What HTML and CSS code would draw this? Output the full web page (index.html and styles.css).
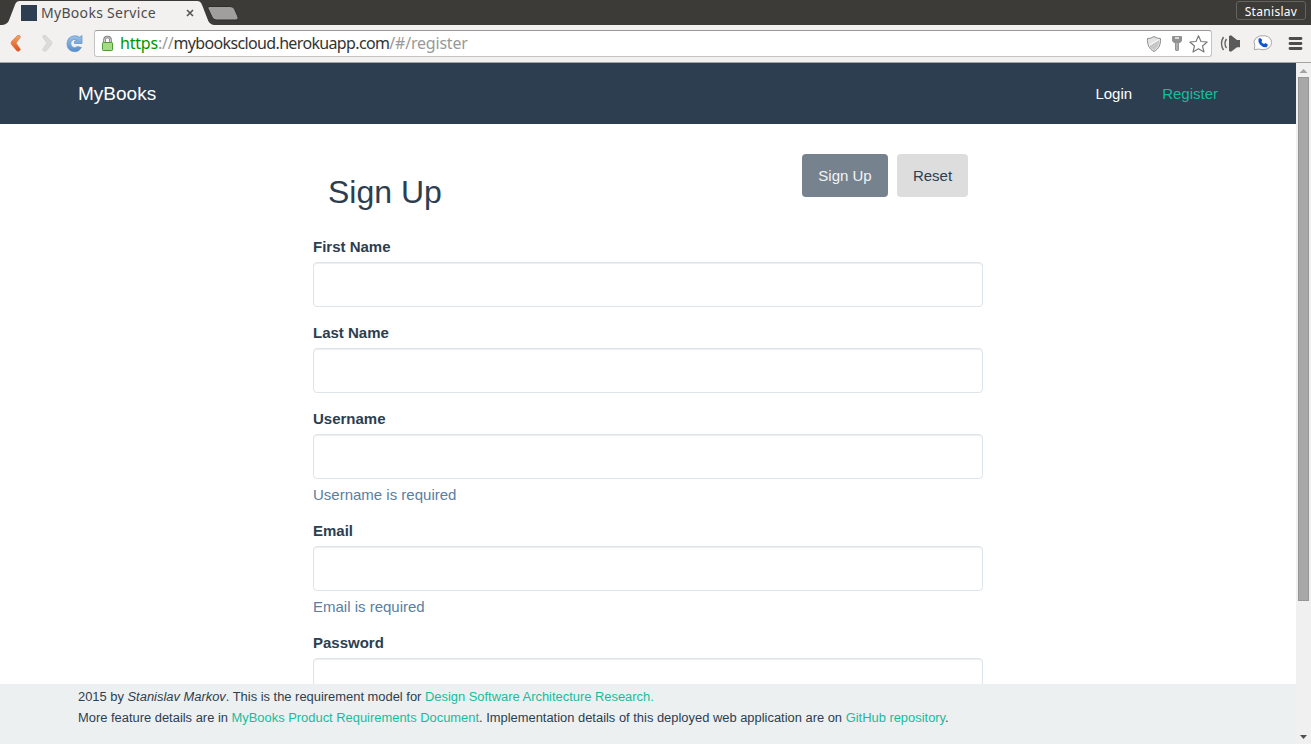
FILE: index.html
```html
<!DOCTYPE html>
<html lang="en">
<head>
<meta charset="utf-8">
<title>MyBooks Service</title>
<link rel="stylesheet" href="styles.css">
</head>
<body>
<div class="window">
  <div class="tabstrip">
    <svg class="tab-shape" width="245" height="25" viewBox="0 0 245 25">
      <path d="M0 25C6 25 8 23 9.500 19L14.500 6C16 2 17 1 21 1H196C200 1 201 2 202.500 6L207.500 19C209 23 211 25 216 25Z" fill="#f2f1f0"/>
      <path d="M209 6.500H230Q233.500 6.500 234.500 9L238 17Q239 20 236 20H216Q213.500 20 212 17L208 8.500Q207.500 6.500 209 6.500Z" fill="#a09f9d" stroke="#302f2b"/>
    </svg>
    <div class="tab">
      <span class="favicon"></span>
      <span class="tab-title">MyBooks Service</span>
      <svg class="tab-close" width="8" height="8" viewBox="0 0 8 8"><path d="M1 1L7 7M7 1L1 7" stroke="#555" stroke-width="1.600"/></svg>
    </div>
    <span class="profile">Stanislav</span>
  </div>
  <div class="toolbar">
    <svg class="nav-icons" width="94" height="36" viewBox="0 26 94 36">
      <defs>
        <linearGradient id="orange" x2="0" y2="1"><stop stop-color="#f3a765"/><stop offset="1" stop-color="#df4c1b"/></linearGradient>
        <linearGradient id="blue" x2="0" y2="1"><stop stop-color="#9cc1e8"/><stop offset="1" stop-color="#548dcc"/></linearGradient>
      </defs>
      <path d="M17.500 35.500Q20 34.500 20.500 37L16 43L20.500 49.500Q19.500 52 17 51L11.500 44.500Q10.500 43 11.500 41.500Z" fill="url(#orange)" stroke="#d96a32" stroke-width=".6"/>
      <path d="M45.500 35.500Q43 34.500 42.500 37L47 43L42.500 49.500Q43.500 52 46 51L51.500 44.500Q52.500 43 51.500 41.500Z" fill="#dcdbda" stroke="#cbcac9" stroke-width=".6"/>
      <path d="M82 35.500V43.500H74.500V41.500L77 40.200Q73.500 38.300 71.300 41Q69.800 44 71.800 46.500Q74.500 49 77.500 46.500L81.500 47.500Q79 52 74.500 51.700Q67 51 67 43.500Q67.500 36.500 74.500 35.800Q77.500 35.700 79.500 37.200Z" fill="url(#blue)" stroke="#5c91c8" stroke-width=".7"/>
    </svg>
    <div class="omnibox">
      <svg class="lock" width="13" height="17" viewBox="0 0 13 17">
        <path d="M3.500 8V5Q3.500 2 6.500 2T9.500 5V8" fill="none" stroke="#777" stroke-width="2.600"/>
        <path d="M3.500 8V5Q3.500 2 6.500 2T9.500 5V8" fill="none" stroke="#ddd" stroke-width=".9"/>
        <rect x="1.500" y="7.500" width="10" height="8" rx=".8" fill="#a3dc82" stroke="#4b9b32"/>
      </svg>
      <span class="url"><span class="scheme">https</span><span class="dim">://</span><span class="host">mybookscloud.herokuapp.com</span><span class="dim">/#/register</span></span>
      <svg class="box-icons" width="64" height="20" viewBox="1145 34 64 20">
        <path d="M1154 36.500Q1157 38.700 1160.500 38.500C1161 44 1159 49 1154 51.500C1149 49 1147 44 1147.500 38.500Q1151 38.700 1154 36.500Z" fill="#e3e3e3" stroke="#8c8c8c"/>
        <path d="M1149 46L1159.300 39.700Q1159.500 46.500 1154 50Q1151 48.500 1149 46Z" fill="#c7c7c7"/>
        <path d="M1149 45.500L1159 39.500" stroke="#fff"/>
        <path d="M1173 36H1181Q1182 36 1182 37V41L1180 43H1179V50L1178 51H1176L1175 50V43H1174L1172 41V37Q1172 36 1173 36Z" fill="#929292"/>
        <path d="M1175 38H1179" stroke="#fff" stroke-width="1.300"/><path d="M1177 43V50" stroke="#ccc"/>
        <path d="M1198.500 35.700L1201 41.500L1207.200 42L1202.500 46L1204 52L1198.500 48.800L1193 52L1194.500 46L1189.800 42L1196 41.500Z" fill="#fff" stroke="#777" stroke-width="1.100" stroke-linejoin="round"/>
      </svg>
    </div>
    <svg class="ext-icons" width="90" height="24" viewBox="1217 32 90 24">
      <path d="M1229 36L1231 35.300L1237 40H1240V47.300H1237L1231 51.700L1229 51Z" fill="#5a5a5a"/>
      <path d="M1226.500 39Q1223.500 43.500 1226.500 48M1223.500 37Q1219.500 43.500 1223.500 50" fill="none" stroke="#666" stroke-width="1.500"/>
      <path d="M1254.300 49.700L1254.800 45.500Q1252.500 41 1256 38Q1259.500 34.800 1265 35.800Q1271.500 37.200 1271.500 42.500Q1271 49.300 1263 49.700Q1260 49.500 1258.500 49Z" fill="#fff" stroke="#a6a6a6"/>
      <path d="M1260 38L1262.200 39.700L1261.500 42Q1262.500 43.500 1264 44L1265.800 43L1268 45L1266.500 47.300Q1262.500 47.600 1260 44.500Q1257.800 41.500 1258.500 38.700Z" fill="#0d55d2"/>
      <path d="M1290 38.500H1301M1290 43.500H1301M1290 48.500H1301" stroke="#4d4d4d" stroke-width="2.800" stroke-linecap="round"/>
    </svg>
  </div>
  <div class="viewport">
    <div class="page">
      <nav class="navbar">
        <a class="brand">MyBooks</a>
        <div class="links"><a>Login</a><a class="active">Register</a></div>
      </nav>
      <main class="form">
        <header class="form-head">
          <h1>Sign Up</h1>
          <div class="actions"><button class="btn primary">Sign Up</button><button class="btn">Reset</button></div>
        </header>
        <div class="group"><label for="first">First Name</label><input id="first"></div>
        <div class="group"><label for="last">Last Name</label><input id="last"></div>
        <div class="group"><label for="user">Username</label><input id="user"><p>Username is required</p></div>
        <div class="group"><label for="email">Email</label><input id="email"><p>Email is required</p></div>
        <div class="group"><label for="pass">Password</label><input id="pass" type="password"></div>
      </main>
      <footer class="footer">
        <div>2015 by <em>Stanislav Markov</em>. This is the requirement model for <a>Design Software Architecture Research.</a></div>
        <div>More feature details are in <a>MyBooks Product Requirements Document</a>. Implementation details of this deployed web application are on <a>GitHub repository</a>.</div>
      </footer>
    </div>
    <div class="scrollbar">
      <svg width="15" height="14" viewBox="0 0 15 14"><path d="M3.500 10H11.500L7.500 6Z" fill="#a3a3a3"/></svg>
      <div class="thumb"></div>
      <svg class="down" width="15" height="14" viewBox="0 0 15 14"><path d="M4 5H11L7.500 9Z" fill="#505050"/></svg>
    </div>
  </div>
</div>
</body>
</html>
```

FILE: styles.css
```css
* { box-sizing: border-box; }
body { margin: 0; font: 15px/21px "Liberation Sans", Arial, sans-serif; color: #2c3e50; background: #fff; }
.window { width: 1311px; height: 744px; overflow: hidden; display: flex; flex-direction: column; }
svg { display: block; flex: none; }

.tabstrip { height: 25px; flex: none; background: #3c3b37; display: flex; justify-content: space-between; position: relative; font-family: "Noto Sans", sans-serif; }
.tab-shape { position: absolute; left: 0; top: 0; }
.tab { position: relative; display: flex; align-items: center; padding-left: 21px; width: 210px; height: 25px; }
.favicon { width: 16px; height: 16px; background: #2c3e50; margin-right: 4px; }
.tab-title { font-size: 14px; color: #4c4c4c; white-space: nowrap; width: 145px; letter-spacing: .3px; }
.profile { height: 19px; width: 70px; margin: 1px 5px 0 0; border: 1px solid #65635d; border-radius: 3px; color: #fff; font-size: 12px; line-height: 19px; text-align: center; letter-spacing: .3px; }

.toolbar { height: 38px; flex: none; background: #f2f1f0; border-bottom: 1px solid #a5a4a2; display: flex; align-items: center; }
.omnibox { width: 1118px; height: 27px; border: 1px solid #c4c3c2; border-top-color: #999; border-radius: 3px; background: #fff; display: flex; align-items: center; padding: 0 2px 0 6px; }
.url { flex: 1; margin-left: 6px; padding-bottom: 2px; font: 16px/24px "Noto Sans", sans-serif; color: #333; white-space: nowrap; letter-spacing: -.2px; }
.host { letter-spacing: -.65px; }
.scheme { color: #009500; }
.dim { color: #999; }
.ext-icons { margin-left: 5px; }

.viewport { flex: 1; min-height: 0; display: flex; }
.page { width: 1296px; display: flex; flex-direction: column; overflow: hidden; }
.navbar { height: 61px; flex: none; background: #2c3e50; color: #fff; display: flex; align-items: center; justify-content: space-between; padding: 0 78px; }
.brand { font-size: 19px; }
.links { display: flex; gap: 30px; }
.active, .footer a { color: #18bc9c; }
.form { width: 670px; margin: 0 auto; flex: 1; min-height: 0; overflow: hidden; }
.form-head { height: 112px; padding: 30px 15px 0; display: flex; justify-content: space-between; align-items: flex-start; }
h1 { font-size: 32px; line-height: 36px; font-weight: 400; margin: 20px 0 0; }
.actions { display: flex; gap: 9px; }
.btn { width: 71px; height: 43px; padding: 0; border: 0; border-radius: 4px; background: #ddd; color: #2c3e50; font: inherit; }
.primary { width: 86px; background: #76838f; color: #f2f3f4; }
.group { margin-bottom: 15px; }
label { display: block; font-weight: 700; margin-bottom: 5px; }
input { display: block; width: 100%; height: 45px; border: 1px solid #dce4ec; border-radius: 4px; background: #fff; box-shadow: inset 0 1px 1px rgba(0, 0, 0, .075); }
.group p { margin: 5px 0 0; color: #597ea2; }
.footer { height: 60px; flex: none; background: #ecf0f1; padding: 2px 78px; font-size: 12.92px; white-space: nowrap; }
.scrollbar { width: 15px; background: #f0f0f0; display: flex; flex-direction: column; }
.thumb { height: 524px; width: 11px; margin-left: 2px; background: #a8a8a8; border: 1px solid #969696; }
.down { margin-top: auto; }
```
